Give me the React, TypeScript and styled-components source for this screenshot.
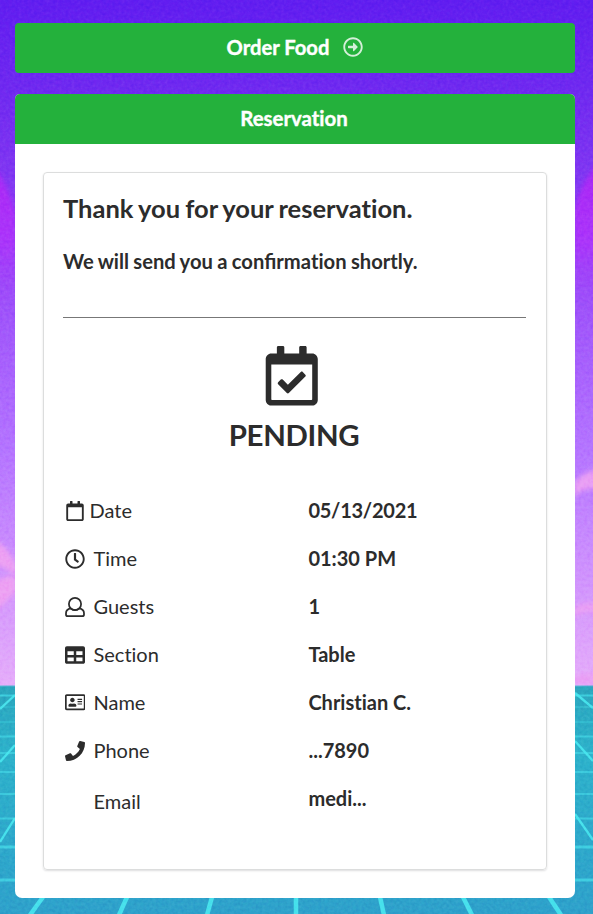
import React from 'react';
import styled, { createGlobalStyle } from 'styled-components';
import {
  FaPhone,
  FaRegAddressCard,
  FaRegArrowAltCircleRight,
  FaRegCalendar,
  FaRegCalendarCheck,
  FaRegClock,
  FaTable,
} from 'react-icons/fa';

const GlobalStyle = createGlobalStyle`
  *, *::before, *::after { box-sizing: border-box; }
  body {
    margin: 0;
    background: #6a2df0;
    color: #2c2c2c;
    font-family: Lato, 'Liberation Sans', sans-serif;
    font-variant-ligatures: none;
    -webkit-font-smoothing: antialiased;
  }
`;

const Page = styled.main`
  position: relative;
  isolation: isolate;
  height: 914px;
  width: 593px;
  overflow: hidden;
  padding: 23px 18px 16px 15px;
  display: flex;
  flex-direction: column;
  gap: 21px;
`;

const Scenery = styled.svg`
  position: absolute;
  inset: 0;
  z-index: -1;
`;

const Grain = styled.rect`
  mix-blend-mode: soft-light;
`;

const OrderButton = styled.button`
  display: flex;
  align-items: center;
  justify-content: center;
  gap: 14px;
  flex: none;
  height: 50px;
  padding: 0 0 2px;
  border: 0;
  border-radius: 4px;
  background: #24b13c;
  color: #fff;
  font: 700 20.2px/28px Lato, 'Liberation Sans', sans-serif;
  -webkit-text-stroke: 0.4px #fff;
  svg { opacity: 0.8; stroke-width: 0; }
`;

const Card = styled.section`
  display: flex;
  flex-direction: column;
  height: 804px;
  border-radius: 5px 5px 7px 7px;
  overflow: hidden;
  background: #fff;
`;

const CardHeader = styled.h2`
  flex: none;
  margin: 0;
  height: 50px;
  padding-right: 2px;
  background: #24b13c;
  color: #fff;
  text-align: center;
  font-size: 20.4px;
  font-weight: 700;
  line-height: 48px;
  -webkit-text-stroke: 0.4px #fff;
`;

const Panel = styled.div`
  flex: 1;
  margin: 28px;
  padding: 19px 20px 0 19px;
  border: 1px solid #dcdddd;
  border-radius: 4px;
  box-shadow: 0 1px 2px rgba(34, 36, 38, 0.15);
`;

const Title = styled.h3`
  margin: 0;
  font-size: 25.5px;
  word-spacing: -1px;
  line-height: 33px;
  white-space: nowrap;
`;

const Subtitle = styled.p`
  margin: 22px 0 0;
  font-size: 20.2px;
  word-spacing: -0.6px;
  font-weight: 700;
  line-height: 28px;
  white-space: nowrap;
  font-variant-ligatures: normal;
`;

const PlainLetters = styled.span`
  font-variant-ligatures: none;
`;

const Divider = styled.hr`
  margin: 42px 0 28px;
  border: 0;
  height: 1px;
  background: #777;
`;

const Status = styled.div`
  display: flex;
  flex-direction: column;
  align-items: center;
  padding-right: 5px;
  height: 140px;
  svg { display: block; }
`;

const StatusText = styled.div`
  margin: 10px 0 0 4px;
  font-size: 29.4px;
  letter-spacing: -0.3px;
  font-weight: 700;
  line-height: 38px;
`;

const Row = styled.div`
  display: grid;
  grid-template-columns: 245.4px 1fr;
  align-items: center;
  height: 48px;
  font-size: 20px;
  line-height: 28px;
`;

const Label = styled.span<{ $gap: number; $drop?: number }>`
  display: flex;
  align-items: center;
  gap: ${({ $gap }) => $gap}px;
  padding-top: ${({ $drop = 0 }) => $drop}px;
`;

const IconSlot = styled.span`
  display: flex;
  flex: none;
  align-items: center;
  justify-content: center;
  width: 22.5px;
  height: 24px;
  padding: 1px 0 0 1px;
`;

const Value = styled.strong<{ $tracking?: number }>`
  font-weight: 700;
  letter-spacing: ${({ $tracking = 0 }) => $tracking}px;
`;

const PersonIcon = () => (
  <svg width="20" height="20" viewBox="0 0 20 20" fill="none" stroke="currentColor" strokeWidth="1.75" strokeLinejoin="round">
    <circle cx="10" cy="7" r="6.1" />
    <path d="M5.7 11.4C2.7 12 1 13.6 1 16.2v1.2c0 1 .7 1.7 1.7 1.7h14.6c1 0 1.7-.7 1.7-1.7v-1.2c0-2.6-1.7-4.2-4.7-4.8-1.2 1.1-2.6 1.7-4.3 1.7s-3.1-.6-4.3-1.7Z" />
  </svg>
);

const horizontals: [number, number][] = [
  [695.5, 0.75], [707, 0.3], [722, 0.3], [736.5, 0.65], [753, 0.6],
  [772, 0.6], [794, 0.6], [818.5, 0.65], [847, 0.75], [880, 0.75],
];

const rays = [
  'M15 695L0 709', 'M15 745L0 762', 'M15 818L0 842', 'M43 897L30 915',
  'M127 897L119 915', 'M212 897L207 915', 'M296 897V915', 'M380 897L384 915',
  'M463 897L472 915', 'M549 897L561 915', 'M575 693L593 708',
  'M575 741L593 761', 'M575 814L593 840',
];

const Landscape = () => (
  <Scenery width="593" height="914" viewBox="0 0 593 914" aria-hidden="true">
    <defs>
      <linearGradient id="sky" x1="0" y1="0" x2="0" y2="1">
        <stop offset="0" stopColor="#611df0" />
        <stop offset="0.15" stopColor="#722bf0" />
        <stop offset="0.32" stopColor="#8a3ef3" />
        <stop offset="0.45" stopColor="#9f54fa" />
        <stop offset="0.65" stopColor="#b474ff" />
        <stop offset="0.82" stopColor="#cd90fd" />
        <stop offset="1" stopColor="#e6aefa" />
      </linearGradient>
      <linearGradient id="glow" x1="0" y1="165" x2="0" y2="320" gradientUnits="userSpaceOnUse">
        <stop offset="0" stopColor="#aa26f5" />
        <stop offset="0.5" stopColor="#ab35fa" />
        <stop offset="1" stopColor="#a04ffa" stopOpacity="0" />
      </linearGradient>
      <linearGradient id="sea" x1="0" y1="0" x2="0" y2="1">
        <stop offset="0" stopColor="#2ba6be" />
        <stop offset="0.3" stopColor="#2db2cb" />
        <stop offset="1" stopColor="#2ea1cb" />
      </linearGradient>
      <filter id="soft"><feGaussianBlur stdDeviation="2.5" /></filter>
      <filter id="grain" x="0" y="0" width="100%" height="100%" colorInterpolationFilters="sRGB">
        <feTurbulence type="fractalNoise" baseFrequency="0.32" numOctaves="2" seed="4" />
        <feColorMatrix type="saturate" values="0.4" />
        <feComponentTransfer><feFuncA type="linear" slope="0" intercept="1" /></feComponentTransfer>
      </filter>
    </defs>
    <rect width="593" height="687" fill="url(#sky)" />
    <g filter="url(#soft)">
      <path d="M-8 164Q5 178 16 213V350H-8ZM600 163Q581 180 574 212V350H600Z" fill="url(#glow)" />
      <path d="M-5 540Q9 548 16 565V576Q3 565-5 566ZM-5 582Q7 574 16 577V592Q7 601-5 612Z" fill="#eda1f3" />
      <path d="M574 483Q584 470 598 470V490Q584 486 574 497ZM574 608Q585 600 598 604V614Q585 609 574 617ZM574 677Q585 671 598 675V684H574Z" fill="#e99ff4" />
    </g>
    <rect y="686" width="593" height="228" fill="url(#sea)" />
    <path d="M0 686H593" stroke="#57b2d4" />
    {horizontals.map(([y, opacity]) => (
      <path key={y} d={`M0 ${y}H593`} stroke="#46dce9" strokeWidth={y > 840 ? 3 : 2} opacity={opacity} />
    ))}
    {rays.map((d, index) => (
      <path key={d} d={d} stroke="#4ae8f0" strokeWidth={index > 2 && index < 10 ? 4.5 : 2.3} opacity="0.9" />
    ))}
    <Grain width="593" height="914" filter="url(#grain)" opacity="0.3" />
  </Scenery>
);

const details = [
  { label: 'Date', value: '05/13/2021', icon: <FaRegCalendar size={20} />, gap: 4, tracking: -0.25 },
  { label: 'Time', value: '01:30 PM', icon: <FaRegClock size={20} /> },
  { label: 'Guests', value: '1', icon: <PersonIcon /> },
  { label: 'Section', value: 'Table', icon: <FaTable size={20} /> },
  { label: 'Name', value: 'Christian C.', icon: <FaRegAddressCard size={20.5} /> },
  { label: 'Phone', value: '...7890', icon: <FaPhone size={20} /> },
  { label: 'Email', value: 'medi...', icon: null, drop: 6 },
];

export default function App() {
  return (
    <>
      <GlobalStyle />
      <Page>
        <Landscape />
        <OrderButton type="button">
          Order Food
          <FaRegArrowAltCircleRight size={20} />
        </OrderButton>
        <Card>
          <CardHeader>Reservation</CardHeader>
          <Panel>
            <Title>Thank you for your reservation.</Title>
            <Subtitle>
              We will send you a confirma<PlainLetters>tion</PlainLetters> shortly.
            </Subtitle>
            <Divider />
            <Status>
              <FaRegCalendarCheck size={59.5} />
              <StatusText>PENDING</StatusText>
            </Status>
            {details.map(({ label, value, icon, gap = 8, drop, tracking }) => (
              <Row key={label}>
                <Label $gap={gap} $drop={drop}>
                  <IconSlot>{icon}</IconSlot>
                  {label}
                </Label>
                <Value $tracking={tracking}>{value}</Value>
              </Row>
            ))}
          </Panel>
        </Card>
      </Page>
    </>
  );
}
